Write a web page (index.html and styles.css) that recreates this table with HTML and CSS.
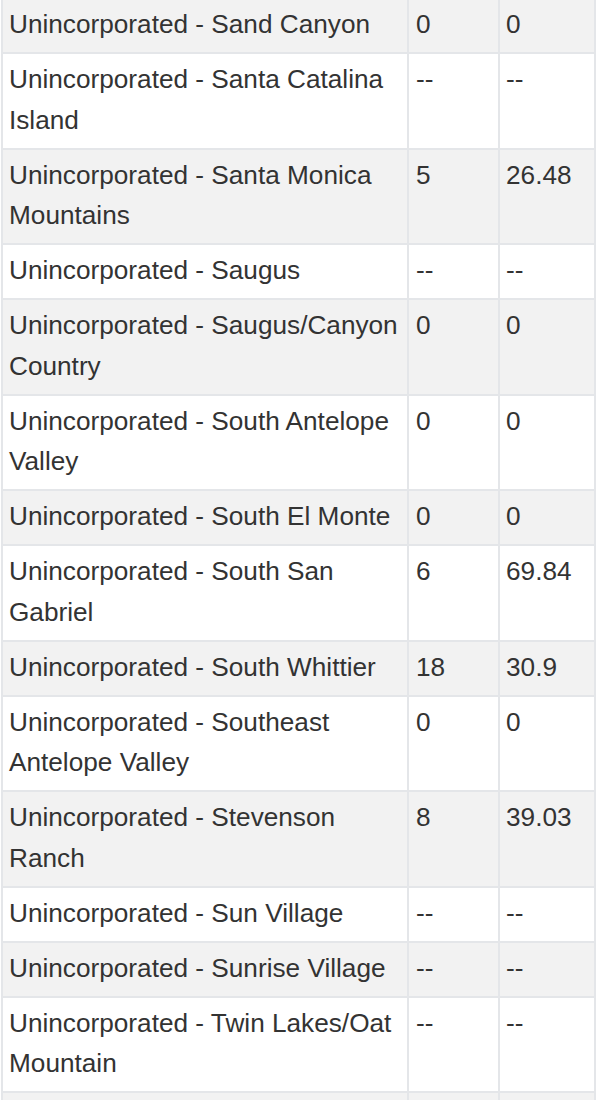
FILE: index.html
```html
<!DOCTYPE html>
<html lang="en">
<head>
<meta charset="utf-8">
<title>Unincorporated areas</title>
<link rel="stylesheet" href="styles.css">
</head>
<body>
<table class="data-table">
  <colgroup>
    <col class="col-name">
    <col class="col-count">
    <col class="col-rate">
  </colgroup>
  <tbody>
    <tr><td>Unincorporated - Sand Canyon</td><td>0</td><td>0</td></tr>
    <tr><td>Unincorporated - Santa Catalina Island</td><td>--</td><td>--</td></tr>
    <tr><td>Unincorporated - Santa Monica Mountains</td><td>5</td><td>26.48</td></tr>
    <tr><td>Unincorporated - Saugus</td><td>--</td><td>--</td></tr>
    <tr><td>Unincorporated - Saugus/Canyon Country</td><td>0</td><td>0</td></tr>
    <tr><td>Unincorporated - South Antelope Valley</td><td>0</td><td>0</td></tr>
    <tr><td>Unincorporated - South El Monte</td><td>0</td><td>0</td></tr>
    <tr><td>Unincorporated - South San Gabriel</td><td>6</td><td>69.84</td></tr>
    <tr><td>Unincorporated - South Whittier</td><td>18</td><td>30.9</td></tr>
    <tr><td>Unincorporated - Southeast Antelope Valley</td><td>0</td><td>0</td></tr>
    <tr><td>Unincorporated - Stevenson Ranch</td><td>8</td><td>39.03</td></tr>
    <tr><td>Unincorporated - Sun Village</td><td>--</td><td>--</td></tr>
    <tr><td>Unincorporated - Sunrise Village</td><td>--</td><td>--</td></tr>
    <tr><td>Unincorporated - Twin Lakes/Oat Mountain</td><td>--</td><td>--</td></tr>
    <tr class="row-next"><td></td><td></td><td></td></tr>
  </tbody>
</table>
</body>
</html>
```
FILE: styles.css
```css
html, body {
  margin: 0;
  padding: 0;
  background: #ffffff;
}

body {
  font-family: "Liberation Sans", Arial, Helvetica, sans-serif;
  font-size: 26.2px;
  color: #333333;
  overflow: hidden;
}

.data-table {
  margin: -3px 0 0 1px;
  width: 595px;
  table-layout: fixed;
  border-collapse: separate;
  border-spacing: 0;
}

.col-name { width: 406px; }
.col-count { width: 91px; }
.col-rate { width: 98px; }

.data-table td {
  box-sizing: border-box;
  vertical-align: top;
  line-height: 40.5px;
  padding: 5px 4px 7.5px 6px;
  border-top: 2px solid #e4e6e9;
  border-left: 2px solid #e4e6e9;
  white-space: normal;
}

.data-table td:last-child {
  border-right: 2px solid #e4e6e9;
}

.data-table td:nth-child(2) {
  padding-left: 7px;
}

.data-table tr:nth-child(odd) td {
  background: #f2f2f2;
}

.data-table tr:nth-child(even) td {
  background: #ffffff;
}

.data-table .row-next td {
  height: 55px;
}
```
